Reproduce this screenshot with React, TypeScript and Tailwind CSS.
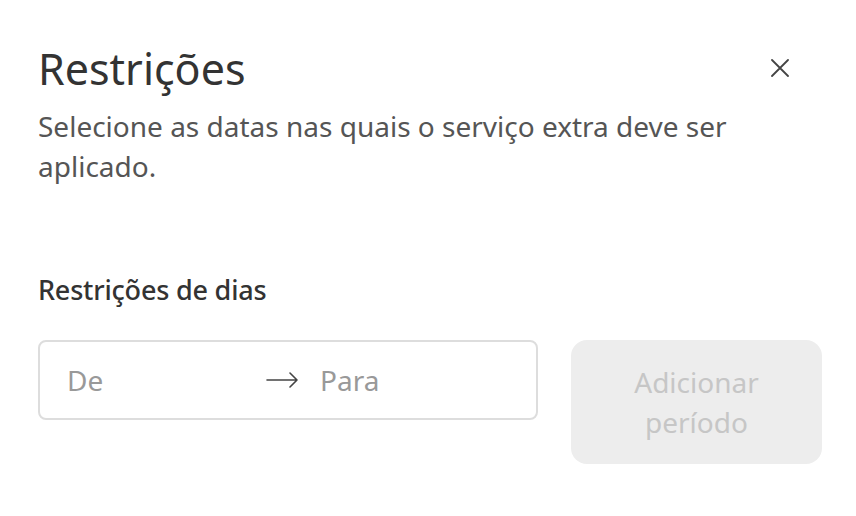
export default function App() {
  return (
    <div className="w-[856px] h-[516px] bg-white font-['Noto_Sans',sans-serif] pl-[38px] pr-[34px] pt-[39px]">
      <div className="flex items-start justify-between">
        <h1 className="text-[43px] leading-[60px] text-[#333]">Restrições</h1>
        <button className="mt-[20px] mr-[33px] text-[#444]">
          <svg width="18" height="18" viewBox="0 0 18 18" fill="none" stroke="currentColor" strokeWidth="1.8" strokeLinecap="round">
            <path d="M1 1L17 17M17 1L1 17" />
          </svg>
        </button>
      </div>
      <p className="mt-[7px] w-[730px] text-[28px] leading-[40px] text-[#555]">
        Selecione as datas nas quais o serviço extra deve ser aplicado.
      </p>

      <h2 className="mt-[84px] text-[27px] leading-[40px] text-[#333] font-medium tracking-[-0.2px]">
        Restrições de dias
      </h2>

      <div className="mt-[30px] flex items-start gap-[33px]">
        <div className="w-[500px] h-[80px] rounded-lg border-2 border-[#ddd] flex items-center px-[27px] text-[28px] text-[#999]">
          <span className="w-[199px]">De</span>
          <svg className="w-[33px] h-[16px] text-[#444]" viewBox="0 0 33 16" fill="none" stroke="currentColor" strokeWidth="1.6" strokeLinecap="round" strokeLinejoin="round">
            <path d="M1 8H31M24 1L31 8L24 15" />
          </svg>
          <span className="ml-[21px]">Para</span>
        </div>
        <button className="w-[251px] h-[124px] rounded-2xl bg-[#ededed] text-[#c6c6c6] text-[28px] leading-[40px] px-[30px]">
          Adicionar período
        </button>
      </div>
    </div>
  );
}
